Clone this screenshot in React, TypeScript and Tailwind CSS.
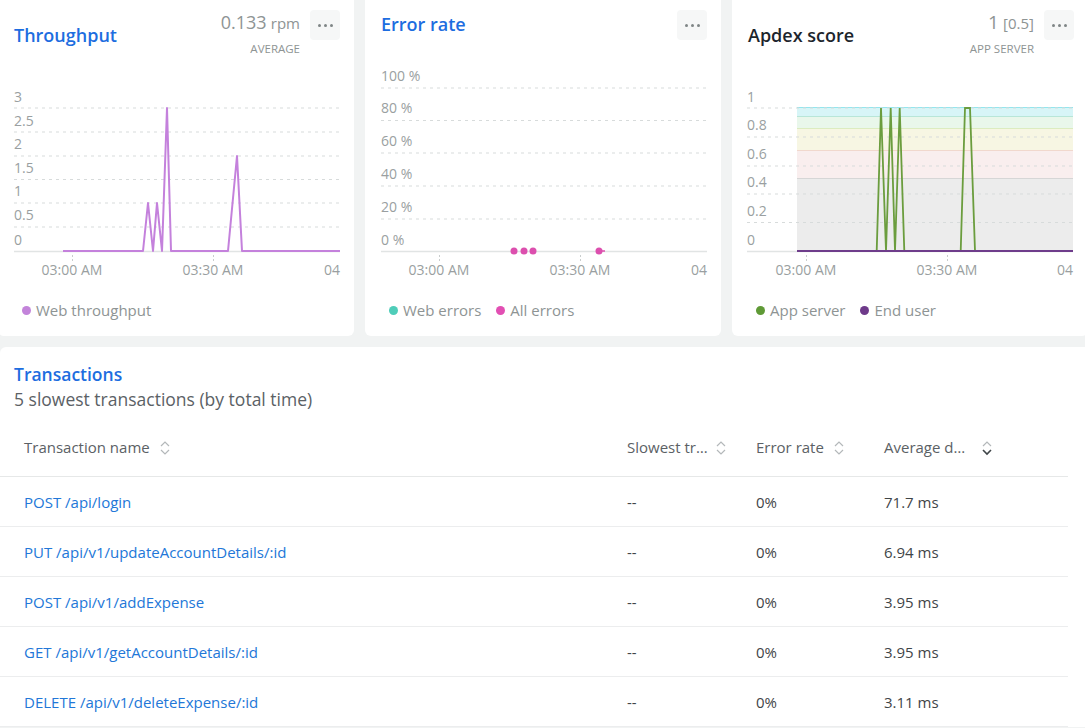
import React from "react";

const GRID = "#d7dbdb";
const AXIS = "#e1e4e4";
const LABEL = "#9a9fa1";

type ChartProps = {
  labels: { text: string; y: number }[];
  grid: number[];
  x0: number;
  x1: number;
  children?: React.ReactNode;
  under?: React.ReactNode;
};

function Chart({ labels, grid, x0, x1, children, under }: ChartProps) {
  return (
    <svg width={356} height={230} viewBox="0 60 356 230" className="block">
      {under}
      {grid.map((y) => (
        <line key={y} x1={x0} x2={x1} y1={y} y2={y} stroke={GRID} strokeWidth={1} strokeDasharray="3 4" />
      ))}
      <line x1={x0} x2={x1} y1={251.5} y2={251.5} stroke={AXIS} strokeWidth={1.5} />
      {[74, 215].map((x) => (
        <line key={x} x1={x + 0.5} x2={x + 0.5} y1={255} y2={262} stroke="#c9cdcd" strokeWidth={1} strokeDasharray="2 2" />
      ))}
      {labels.map((l) => (
        <text key={l.text} x={x0} y={l.y + 5} fontSize={14} fill={LABEL} fontFamily="'Open Sans', sans-serif">
          {l.text}
        </text>
      ))}
      <text x={74} y={275} fontSize={14} fill={LABEL} textAnchor="middle" fontFamily="'Open Sans', sans-serif">
        03:00 AM
      </text>
      <text x={215} y={275} fontSize={14} fill={LABEL} textAnchor="middle" fontFamily="'Open Sans', sans-serif">
        03:30 AM
      </text>
      <text x={x1} y={275} fontSize={14} fill={LABEL} textAnchor="end" fontFamily="'Open Sans', sans-serif">
        04
      </text>
      {children}
    </svg>
  );
}

function MoreButton() {
  return (
    <button type="button" className="flex h-[30px] w-[30px] items-center justify-center gap-[3px] rounded-[4px] bg-[#f6f7f7]">
      <span className="h-[3px] w-[3px] rounded-full bg-[#7f8586]" />
      <span className="h-[3px] w-[3px] rounded-full bg-[#7f8586]" />
      <span className="h-[3px] w-[3px] rounded-full bg-[#7f8586]" />
    </button>
  );
}

function Legend({ items }: { items: { color: string; label: string }[] }) {
  return (
    <div className="flex items-center gap-[15px] pl-[24px] pt-[10px]">
      {items.map((i) => (
        <div key={i.label} className="flex items-center gap-[5px]">
          <span className="h-[9px] w-[9px] rounded-full" style={{ background: i.color }} />
          <span className="text-[15px] leading-[20px] text-[#8e9494]">{i.label}</span>
        </div>
      ))}
    </div>
  );
}

function SortIcon({ active, className }: { active?: boolean; className?: string }) {
  return (
    <svg width={12} height={18} viewBox="0 0 12 18" className={`shrink-0 ${className ?? ""}`}>
      <path d="M2 7 L6 3 L10 7" fill="none" stroke="#b4b8ba" strokeWidth={1.2} />
      <path d="M2 11 L6 15 L10 11" fill="none" stroke={active ? "#3f4548" : "#b4b8ba"} strokeWidth={active ? 1.6 : 1.2} />
    </svg>
  );
}

function Card({
  title,
  titleClass,
  value,
  chart,
  legend,
}: {
  title: string;
  titleClass: string;
  value?: React.ReactNode;
  chart: React.ReactNode;
  legend: React.ReactNode;
}) {
  return (
    <div className="flex h-[336px] w-[356px] shrink-0 flex-col rounded-b-[6px] bg-white">
      <div className="flex h-[60px] items-start justify-between pl-[16px] pr-[14px] pt-[10px]">
        <h2 className={`text-[18px] font-semibold leading-[22px] ${titleClass}`}>{title}</h2>
        <div className="flex items-start gap-[10px]">
          {value}
          <MoreButton />
        </div>
      </div>
      {chart}
      {legend}
    </div>
  );
}

const rows = [
  { name: "POST /api/login", err: "0%", avg: "71.7 ms" },
  { name: "PUT /api/v1/updateAccountDetails/:id", err: "0%", avg: "6.94 ms" },
  { name: "POST /api/v1/addExpense", err: "0%", avg: "3.95 ms" },
  { name: "GET /api/v1/getAccountDetails/:id", err: "0%", avg: "3.95 ms" },
  { name: "DELETE /api/v1/deleteExpense/:id", err: "0%", avg: "3.11 ms" },
];

export default function App() {
  return (
    <div className="h-[728px] w-[1085px] overflow-hidden bg-[#f1f3f3] font-['Open_Sans',sans-serif]">
      <div className="-ml-[2px] flex gap-[11px]">
        <Card
          title="Throughput"
          titleClass="mt-[14px] text-[#1d6de0]"
          value={
            <div className="flex flex-col items-end">
              <div className="leading-[24px] text-[#8e9494]">
                <span className="text-[18px]">0.133</span> <span className="text-[15px]">rpm</span>
              </div>
              <div className="mt-[6px] text-[11.5px] leading-[15px] text-[#8e9494]">AVERAGE</div>
            </div>
          }
          chart={
            <Chart
              x0={16}
              x1={342}
              grid={[108, 132, 156, 179.5, 203, 227]}
              labels={[
                { text: "3", y: 97 },
                { text: "2.5", y: 121 },
                { text: "2", y: 144 },
                { text: "1.5", y: 168 },
                { text: "1", y: 191 },
                { text: "0.5", y: 215 },
                { text: "0", y: 240 },
              ]}
            >
              <polyline
                fill="none"
                stroke="#c481dc"
                strokeWidth={2}
                strokeLinejoin="round"
                points="65,251 145,251 150,203 155,251 159,203 164,251 169,108 173,251 230,251 239,156 244,251 342,251"
              />
            </Chart>
          }
          legend={<Legend items={[{ color: "#c384da", label: "Web throughput" }]} />}
        />
        <Card
          title="Error rate"
          titleClass="mt-[3px] text-[#1d6de0]"
          chart={
            <Chart
              x0={16}
              x1={342}
              grid={[88, 120.5, 153, 186, 219]}
              labels={[
                { text: "100 %", y: 76 },
                { text: "80 %", y: 108 },
                { text: "60 %", y: 141 },
                { text: "40 %", y: 174 },
                { text: "20 %", y: 207 },
                { text: "0 %", y: 240 },
              ]}
            >
              <line x1={234} x2={240} y1={251} y2={251} stroke="#dc4fae" strokeWidth={1.5} />
              {[149, 159, 168, 234].map((x) => (
                <circle key={x} cx={x} cy={251} r={3.5} fill="#dc4fae" />
              ))}
            </Chart>
          }
          legend={
            <Legend
              items={[
                { color: "#4fcdb9", label: "Web errors" },
                { color: "#e24fb3", label: "All errors" },
              ]}
            />
          }
        />
        <Card
          title="Apdex score"
          titleClass="mt-[14px] text-[#1d252c]"
          value={
            <div className="flex flex-col items-end">
              <div className="leading-[24px] text-[#8e9494]">
                <span className="text-[19px]">1</span> <span className="text-[15px]">[0.5]</span>
              </div>
              <div className="mt-[6px] text-[11.5px] leading-[15px] text-[#8e9494]">APP SERVER</div>
            </div>
          }
          chart={
            <Chart
              x0={15}
              x1={341}
              grid={[108, 137, 166, 194, 222.5]}
              labels={[
                { text: "1", y: 97 },
                { text: "0.8", y: 125 },
                { text: "0.6", y: 154 },
                { text: "0.4", y: 182 },
                { text: "0.2", y: 211 },
                { text: "0", y: 240 },
              ]}
              under={
                <g>
                  <rect x={65} y={107} width={276} height={9} fill="#d7f5f7" />
                  <rect x={65} y={116} width={276} height={12} fill="#e9f7eb" />
                  <rect x={65} y={128} width={276} height={22} fill="#f7f6e3" />
                  <rect x={65} y={150} width={276} height={28} fill="#f9eeee" />
                  <rect x={65} y={178} width={276} height={73} fill="#ececec" />
                  <line x1={65} x2={341} y1={107.5} y2={107.5} stroke="#94e6ee" />
                  <line x1={65} x2={341} y1={116.5} y2={116.5} stroke="#b8e6d8" />
                  <line x1={65} x2={341} y1={128.5} y2={128.5} stroke="#dcecc0" />
                  <line x1={65} x2={341} y1={150.5} y2={150.5} stroke="#f1d8cd" />
                  <line x1={65} x2={341} y1={178.5} y2={178.5} stroke="#d6d6d6" />
                </g>
              }
            >
              <polyline
                fill="none"
                stroke="#6b9d3e"
                strokeWidth={1.8}
                points="65,251 144.7,251 149,108 154,251 158.7,108 163,251 167.7,108 172.3,251 228.7,251 233,108 238,108 243,251 341,251"
              />
              <line x1={65} x2={341} y1={251} y2={251} stroke="#6e3d8b" strokeWidth={2} />
            </Chart>
          }
          legend={
            <Legend
              items={[
                { color: "#5f9a36", label: "App server" },
                { color: "#6e3a8a", label: "End user" },
              ]}
            />
          }
        />
      </div>

      <div className="mt-[11px] w-[1090px] rounded-tl-[6px] bg-white pt-[16px]">
        <h2 className="pl-[14px] text-[17.5px] font-semibold leading-[22px] text-[#1d6de0]">Transactions</h2>
        <p className="mt-[3px] pl-[14px] text-[17.5px] leading-[22px] text-[#5b6165]">
          5 slowest transactions (by total time)
        </p>
        <div className="mt-[9px] w-[1068px]">
          <div className="flex h-[58px] items-center border-b border-[#e6e8e8] text-[15px] text-[#5b6165]">
            <div className="flex w-[617px] items-center pl-[24px]">
              Transaction name <SortIcon className="ml-[9px]" />
            </div>
            <div className="flex w-[129px] items-center pl-[10px]">
              <span className="w-[88px]">Slowest tr…</span>
              <SortIcon />
            </div>
            <div className="flex w-[128px] items-center pl-[10px]">
              <span className="w-[77px]">Error rate</span>
              <SortIcon />
            </div>
            <div className="flex w-[134px] items-center pl-[10px]">
              <span className="w-[97px]">Average d…</span>
              <SortIcon active />
            </div>
          </div>
          {rows.map((r) => (
            <div key={r.name} className="flex h-[50px] items-center border-b border-[#ecedee] pt-[2px] text-[15px]">
              <div className="w-[617px] pl-[24px] text-[#2277d8]">{r.name}</div>
              <div className="w-[129px] pl-[10px] text-[#3f4548]">--</div>
              <div className="w-[128px] pl-[10px] text-[#3f4548]">{r.err}</div>
              <div className="w-[134px] pl-[10px] text-[#3f4548]">{r.avg}</div>
            </div>
          ))}
        </div>
      </div>
    </div>
  );
}
